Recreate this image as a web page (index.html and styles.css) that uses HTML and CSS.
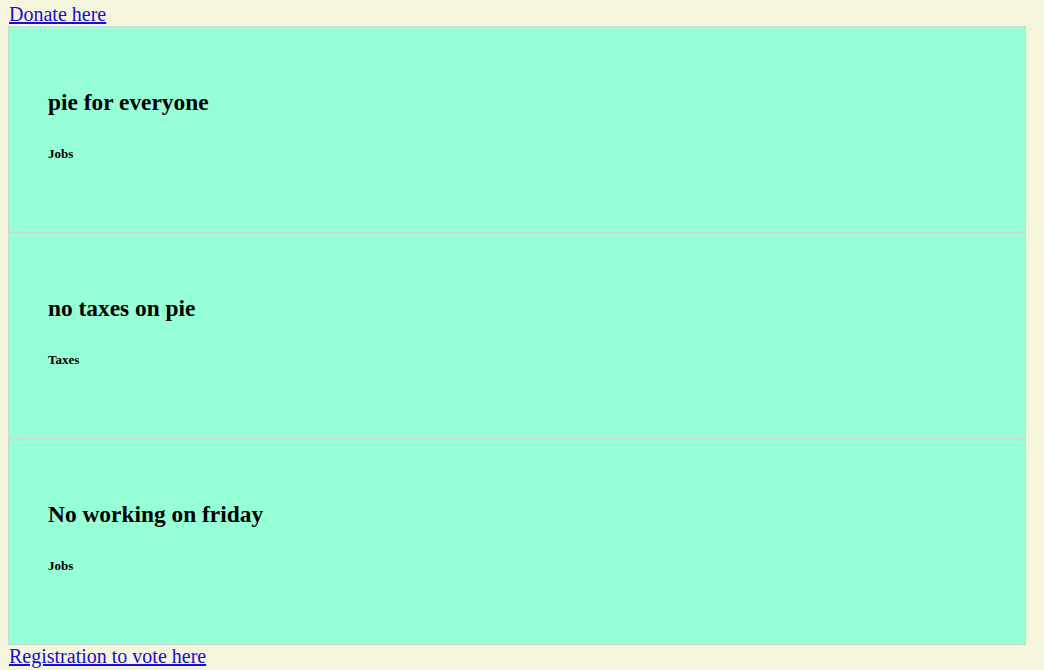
FILE: index.html
```html
<!DOCTYPE html>
<html>
<head>
<meta charset="utf-8">
<link rel="stylesheet" href="styles.css">
</head>
<body>
<a class="top-link" href="#">Donate here</a>
<div class="cards">
  <div class="card">
    <h2 class="card-title">pie for everyone</h2>
    <h5 class="card-tag">Jobs</h5>
  </div>
  <div class="card">
    <h2 class="card-title">no taxes on pie</h2>
    <h5 class="card-tag">Taxes</h5>
  </div>
  <div class="card">
    <h2 class="card-title">No working on friday</h2>
    <h5 class="card-tag">Jobs</h5>
  </div>
</div>
<a class="top-link" href="#">Registration to vote here</a>
</body>
</html>
```

FILE: styles.css
```css
html {
  background: #f5f4dc;
}
body {
  margin: 3px 8px 0 8px;
  font-family: "Liberation Serif", "Times New Roman", serif;
  background: #f5f4dc;
}
.top-link {
  display: block;
  width: max-content;
  margin-left: 1px;
  font-size: 20px;
  line-height: 23px;
  color: #1a0dcc;
  text-decoration: underline;
}
.cards {
  width: 1018px;
  border: 1px solid #c9d9cf;
  background: #96ffd6;
  box-sizing: border-box;
}
.card {
  display: flex;
  flex-direction: column;
  padding: 61px 39px 70px 39px;
  height: 205px;
  box-sizing: border-box;
}
.card + .card {
  border-top: 1px solid #c9d9cf;
  height: 206px;
}
.card-title {
  margin: 0;
  font-size: 23.4px;
  line-height: 28px;
  font-weight: bold;
  color: #000;
}
.card-tag {
  margin: 30px 0 0 0;
  font-size: 13px;
  line-height: 15px;
  font-weight: bold;
  color: #000;
}
```
